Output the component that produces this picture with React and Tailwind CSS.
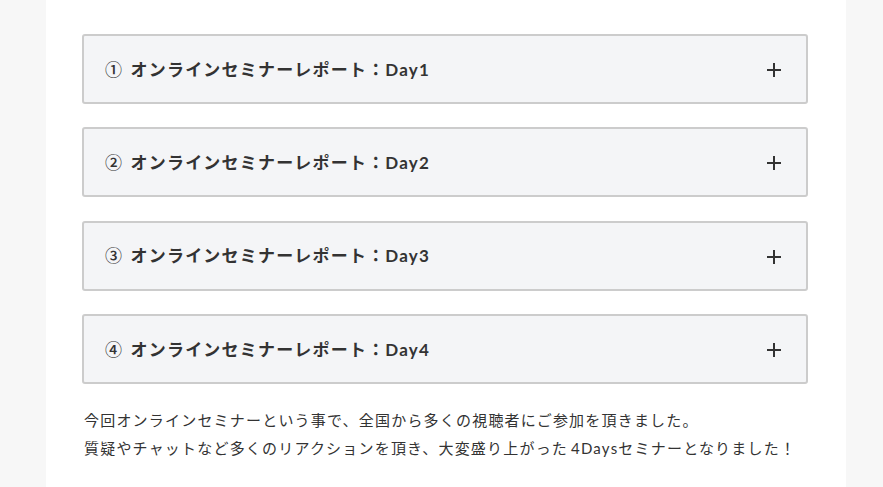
export default function App() {
  const items = ["①", "②", "③", "④"];
  return (
    <div className="min-h-[487px] w-full bg-[#f7f7f7]" style={{ fontFamily: 'Lato, "Noto Sans CJK JP", sans-serif' }}>
      <div className="ml-[46px] w-[800px] min-h-[487px] bg-white pl-[36px] pr-[38px] pt-[34px]">
        <div className="flex flex-col gap-[23.33px]">
          {items.map((n, i) => (
            <div key={i} className="flex h-[70px] items-center justify-between rounded-[3px] border-2 border-[#cccccc] bg-[#f4f5f7] pl-[21px] pr-[24px]">
              <div className="text-[17px] font-bold tracking-[1.2px] text-[#333333]">
                <span className="mr-[2px] font-medium" style={{ fontFamily: '"Noto Sans CJK JP", sans-serif' }}>{n}</span> オンラインセミナーレポート：Day{i + 1}
              </div>
              <svg width="16" height="16" viewBox="0 0 16 16" className="mt-[2px]">
                <path d="M8 1v14M1 8h14" stroke="#333333" strokeWidth="2" fill="none" />
              </svg>
            </div>
          ))}
        </div>
        <div className="mt-[22px] pl-[2px] text-[15px] leading-[28px] tracking-[1.2px] text-[#333333]">
          <p>今回オンラインセミナーという事で、全国から多くの視聴者にご参加を頂きました。</p>
          <p>質疑やチャットなど多くのリアクションを頂き、大変盛り上がった<span className="ml-[3px]">4Days</span>セミナーとなりました！</p>
        </div>
      </div>
    </div>
  );
}
